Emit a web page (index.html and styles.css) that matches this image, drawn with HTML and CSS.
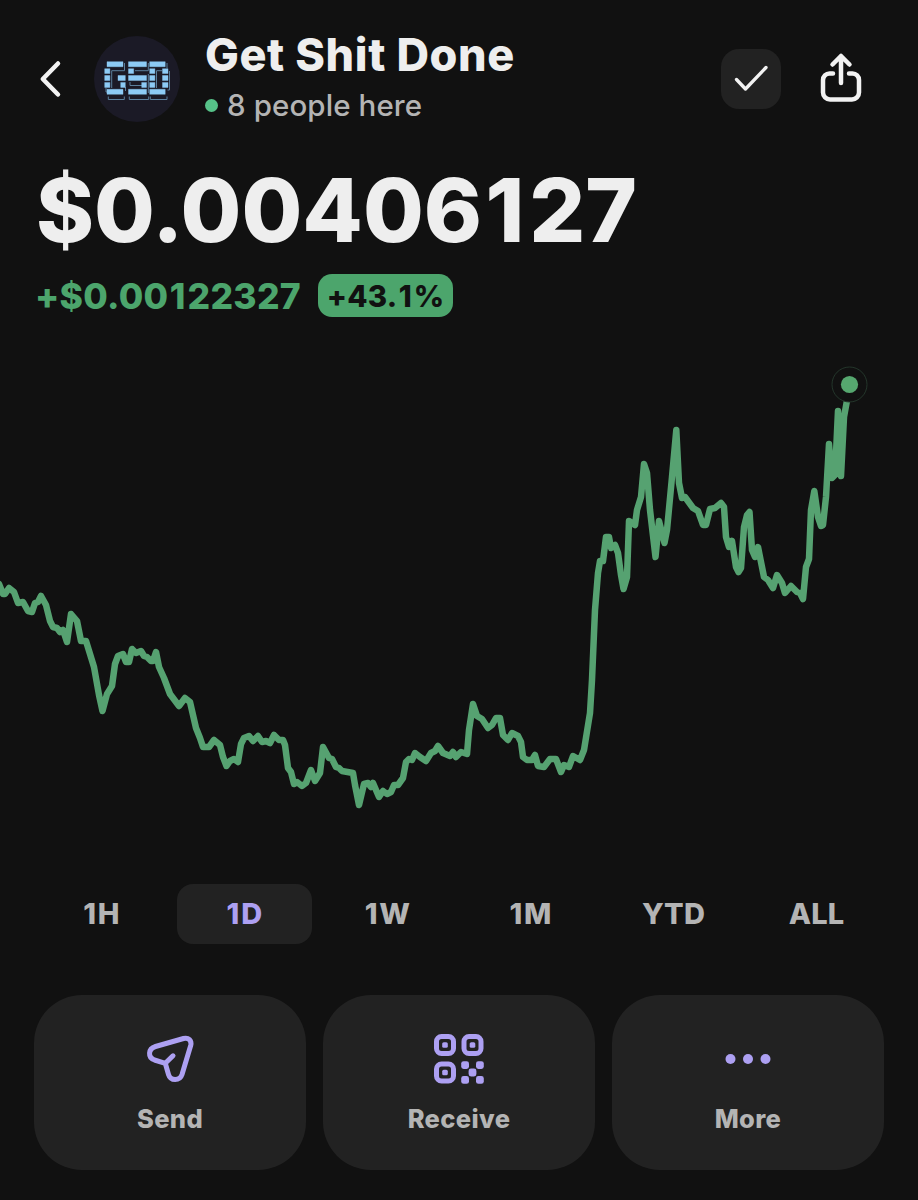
FILE: index.html
```html
<!DOCTYPE html>
<html lang="en">
<head>
<meta charset="utf-8">
<title>Get Shit Done</title>
<link rel="stylesheet" href="styles.css">
</head>
<body>
<main class="screen">
  <header class="header">
    <svg class="back" viewBox="0 0 24 40" aria-label="Back"><path d="M20 4.500 4.800 20 20 35.500"/></svg>
    <svg class="avatar" viewBox="0 0 86 86">
      <circle class="avatar-bg" cx="43" cy="43" r="43"/>
      <g class="avatar-shadow">
        <path d="M30.500 27v7.700H17.700V52M54.300 27v7.700H41M73 27v5M62.500 52V34.700H68M75.500 35v19h-2M12 52v4h2M31.500 51v4M36 46v3.500h12M54.300 38v19M14.300 60.500v3h16v-3M35.300 60.500v3h19.400v-3M56.300 60.500v3H73v-3"/>
      </g>
      <g class="avatar-tiles">
        <path d="M13 25.700h16v5H13zM34.500 25.700h18v5h-18zM55.700 25.700h15.500v5H55.700zM10.700 32.700h5.200v4.800h-5.200zM34.500 32.700h5.200v4.800h-5.200zM55.700 32.700h5.200v4.800h-5.200zM68.500 32.700h5.500v4.800h-5.500zM10.700 39.500h5.200v5h-5.200zM24 39.500h7.300v5H24zM34.500 39.500h18v5h-18zM55.700 39.500h5.200v5h-5.200zM68.500 39.500h5.500v5h-5.500zM10.700 46.400h5.200v5h-5.200zM26.700 46.400h4.600v5h-4.600zM47.700 46.400h4.800v5h-4.800zM55.700 46.400h5.200v5h-5.200zM68.500 46.400h5.500v5h-5.500zM13 53.300h16v5H13zM34.500 53.300h18v5h-18zM55.700 53.300h15.500v5H55.700z"/>
      </g>
    </svg>
    <div class="title-group">
      <h1 class="title">Get Shit Done</h1>
      <p class="presence"><span class="presence-dot"></span><span class="presence-text">8 people here</span></p>
    </div>
    <div class="check">
      <svg class="check-icon" viewBox="0 0 36 30"><path d="M3.500 15.500 12.500 25 33 3.500"/></svg>
    </div>
    <svg class="share" viewBox="0 0 42 50"><path d="M13 21.500h-3.500a6.500 6.500 0 0 0-6.500 6.500v12.500a7 7 0 0 0 7 7h22a7 7 0 0 0 7-7V28a6.500 6.500 0 0 0-6.500-6.500H29M21 31V4M12.500 12.500 21 4l8.500 8.500"/></svg>
  </header>

  <section class="quote">
    <div class="price">$0.00406<span class="one">1</span>27</div>
    <div class="change">
      <span class="change-amount">+$0.00<span class="one">1</span>22327</span>
      <span class="change-badge"><span class="change-percent">+43.<span class="one">1</span>%</span></span>
    </div>
  </section>

  <svg class="chart" viewBox="0 350 918 480">
    <polyline class="chart-line" points="-1,584 3,594 5,594 9,588 14,592 18,603 23,602 28,611 32,612 35,603 38,602 41,596 46,605 50,621 53,627 57,628 60,632 63,630 67,642 71,614 77,621 81,641 86,641 94,667 99,695 102.500,711 107,694 112,686 115,664 118,656 123,654 126,662 129,662 132,649 136,653 141,651 144,656 147,657 151,661 153,661 156,652 159,667 164,678 170,694 179,706 185,698 190,702 196,728 200,738 203,747 209,747 214,740 220,745 223,757 226.500,766 230,761 234,759 238,762 241,744 244,738 249,736 253,741 258,736 262,742 266,741 270,743 274,735 279,740 283,740 285,745 288,768 291,772 294,784 297,782 302,786 306,783 311,770 315,781 320,773 323,747 329,758 332,759 336,767 339,768 342,771 353,773 355,785 359,805 364,784 368,783 371,787 373,783 376,790 379,797 383,791 387,794 391,792 394,785 398,785 403,778 406,762 409,759 412,760 415,753 420,757 426,761 431,753 435,751 438,746 443,753 450,756 453,752 456,757 461,752 467,754 469,730 473,704 477,716 482,719 488,728 492,725 496,718 500,718 503,735 508,740 512,733 518,736 521,742 523,757 527,760 532,760 535,755 538,766 544,767 550,759 556,759 561,772 564,765 569,767 573,756 580,760 584,750 590,713 592,680 595,610 598,573 600,561 603,561 606,537 609,537 611,548 615,545 618,553 621,575 623.500,589 627,577 629,521 635,525 637,510 641,497 644,464 647,473 650,510 655.500,557 659,521 664.500,543 667,530 672,477 676.300,430 679,483 682,498 685,497 693,508 698,511 703,525 706,525 710,509 715,508 721,503 724,507 726,537 729,547 732,541 736,567 738.500,572 741,568 744,527 747,515 749.500,512 752,550 755,557 758,547 762,567 764,577 768,580 773,588 777,575 782,583 785,593 791,586 797,592 800,593 803,599 806,567 809,559 811,510 814.300,491 818,517 821,526 823,525 826,497 829,444 832,478 835,475 838,411 841,476 844,417 850,384"/>
    <circle class="chart-halo" cx="849.500" cy="384.500" r="17.500"/>
    <circle class="chart-dot" cx="849.500" cy="384.500" r="8.600"/>
  </svg>

  <nav class="ranges">
    <span class="range"><span class="one">1</span>H</span>
    <span class="range range-active"><span class="one">1</span>D</span>
    <span class="range"><span class="one">1</span>W</span>
    <span class="range"><span class="one">1</span>M</span>
    <span class="range">YTD</span>
    <span class="range">ALL</span>
  </nav>

  <section class="actions">
    <div class="action">
      <svg class="action-icon" viewBox="0 0 54 54"><path class="stroke" d="M12.500 14.500 40.500 6.500C45.500 5.200 49 8.500 47.700 13.500L39 42.500C36.800 49.200 27.500 49.200 25.500 42.500L22.300 31.300 11.500 28C4.500 25.500 5 16.800 12.500 14.500ZM22.300 31.300 30 23.800"/></svg>
      <span class="action-label">Send</span>
    </div>
    <div class="action">
      <svg class="action-icon" viewBox="0 0 54 54">
        <g class="stroke"><rect x="4.500" y="4.500" width="17" height="17" rx="5"/><rect x="32" y="4.500" width="17" height="17" rx="5"/><rect x="4.500" y="32" width="17" height="17" rx="5"/></g>
        <g class="fill"><rect x="10.200" y="10.200" width="5.600" height="5.600" rx="1.600"/><rect x="37.700" y="10.200" width="5.600" height="5.600" rx="1.600"/><rect x="10.200" y="37.700" width="5.600" height="5.600" rx="1.600"/><rect x="29.200" y="29.200" width="7.800" height="7.800" rx="2.400"/><rect x="44" y="29.200" width="7.800" height="7.800" rx="2.400"/><rect x="36.600" y="36.600" width="7.800" height="7.800" rx="2.400"/><rect x="29.200" y="44" width="7.800" height="7.800" rx="2.400"/><rect x="44" y="44" width="7.800" height="7.800" rx="2.400"/></g>
      </svg>
      <span class="action-label">Receive</span>
    </div>
    <div class="action">
      <svg class="action-icon" viewBox="0 0 54 54"><g class="fill"><circle cx="9.500" cy="27" r="5"/><circle cx="27" cy="27" r="5"/><circle cx="44.500" cy="27" r="5"/></g></svg>
      <span class="action-label">More</span>
    </div>
  </section>
</main>
</body>
</html>
```
FILE: styles.css
```css
* { box-sizing: border-box; }

body {
  margin: 0;
  background: #111111;
  color: #eeeeee;
  font-family: Inter, "Liberation Sans", sans-serif;
}

.screen {
  width: 918px;
  height: 1200px;
  overflow: hidden;
  display: flex;
  flex-direction: column;
}

.header {
  height: 158px;
  padding: 36px 56px 0 38px;
  display: flex;
  align-items: flex-start;
}

.back { width: 24px; height: 40px; margin-top: 23px; }
.back path, .share path, .check-icon path {
  fill: none;
  stroke: #f2f2f2;
  stroke-width: 4.5;
  stroke-linecap: round;
  stroke-linejoin: round;
}

.avatar { width: 86px; height: 86px; margin-left: 32px; }
.avatar-bg { fill: #1b1a26; }
.avatar-tiles { fill: #8dcbf5; stroke: #8dcbf5; stroke-width: 0.4; }
.avatar-shadow { fill: none; stroke: #5b7f9c; stroke-width: 1; }

.title-group { flex: 1; margin-left: 25px; }
.title {
  margin: -8px 0 0;
  font-size: 45px;
  line-height: 54px;
  font-weight: 800;
  letter-spacing: 0.6px;
  white-space: nowrap;
}
.presence {
  margin: 5px 0 0;
  height: 36px;
  display: flex;
  align-items: center;
  gap: 9px;
  font-size: 29.5px;
  font-weight: 500;
  letter-spacing: 0.1px;
  color: #b4b4b4;
}
.presence-dot { width: 13px; height: 13px; border-radius: 50%; background: #56c288; }

.check {
  width: 60px;
  height: 60px;
  margin-top: 13px;
  border-radius: 18px;
  background: #222222;
  display: flex;
  align-items: center;
  justify-content: center;
}
.check-icon { width: 36px; height: 30px; }
.check-icon path { stroke-width: 3.3; }
.share { width: 42px; height: 50px; margin: 16px 0 0 39px; }

.one { padding: 0 0.055em 0 0.04em; }

.quote { height: 192px; padding: 0 36px; }
.price {
  height: 104px;
  line-height: 104px;
  font-size: 88px;
  font-weight: 800;
  letter-spacing: 0;
  white-space: nowrap;
}
.change { display: flex; align-items: center; margin-top: 12px; height: 43px; }
.change-amount {
  width: 282px;
  padding-top: 1px;
  margin-left: -1px;
  margin-right: 1px;
  font-size: 35.5px;
  font-weight: 800;
  letter-spacing: 0.25px;
  color: #4ca56c;
  white-space: nowrap;
}
.change-badge {
  width: 135px;
  height: 43px;
  border-radius: 14px;
  background: #4ca56c;
  color: #111111;
  display: flex;
  align-items: center;
  justify-content: center;
  font-size: 29.5px;
  font-weight: 800;
  letter-spacing: 0.3px;
}

.chart { display: block; width: 918px; height: 480px; }
.chart-line {
  fill: none;
  stroke: #56a271;
  stroke-width: 6.5;
  stroke-linecap: round;
  stroke-linejoin: round;
}
.chart-halo { fill: #111111; stroke: #24362b; stroke-width: 1; }
.chart-dot { fill: #56a76f; }

.ranges {
  margin: 54px 30px 0;
  height: 60px;
  display: grid;
  grid-template-columns: repeat(6, 1fr);
  gap: 0;
}
.range {
  margin: 0 4px;
  padding-bottom: 2px;
  display: flex;
  align-items: center;
  justify-content: center;
  border-radius: 16px;
  font-size: 29px;
  font-weight: 800;
  letter-spacing: 0.2px;
  color: #b4b4b4;
}
.range-active { background: #222222; color: #ada0f2; }
.range .one { padding-left: 0; }

.actions {
  margin: 51px 34px 0;
  display: grid;
  grid-template-columns: repeat(3, 1fr);
  gap: 17px;
}
.action {
  height: 175px;
  padding-top: 37px;
  border-radius: 48px;
  background: #222222;
  display: flex;
  flex-direction: column;
  align-items: center;
}
.action-icon { width: 54px; height: 54px; }
.action-icon .stroke { fill: none; stroke: #ada0f2; stroke-width: 5; stroke-linecap: round; stroke-linejoin: round; }
.action-icon .fill { fill: #ada0f2; }
.action-label {
  margin-top: 16px;
  font-size: 25.5px;
  line-height: 34px;
  font-weight: 800;
  letter-spacing: 0.35px;
  color: #b4b4b4;
}
```
